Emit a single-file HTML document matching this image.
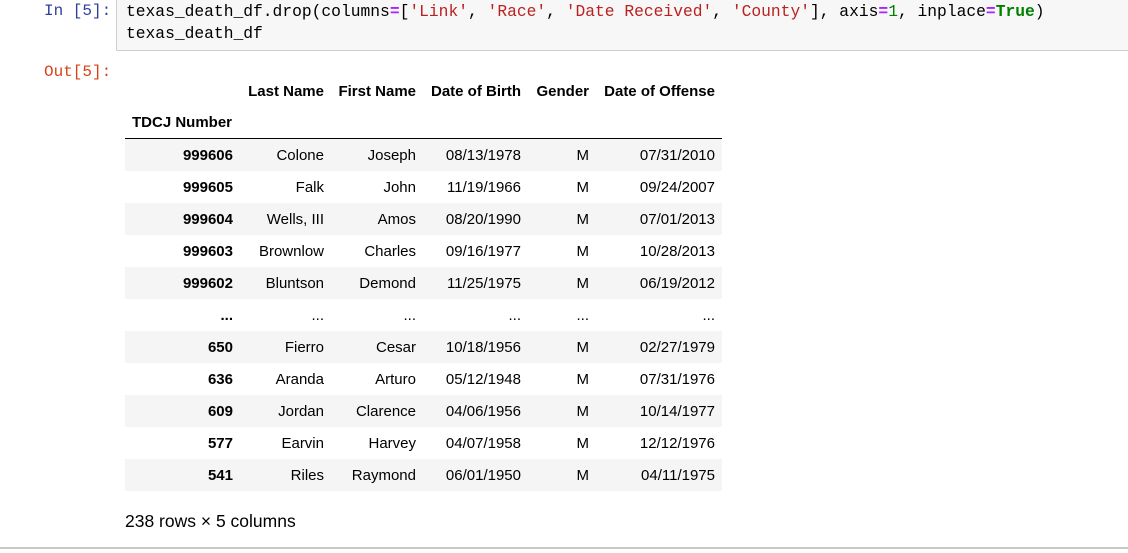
<!DOCTYPE html>
<html><head><meta charset="utf-8"><style>
body{margin:0;width:1128px;height:553px;background:#fff;position:relative;overflow:hidden;font-family:"Liberation Sans",Arial,sans-serif;}
.mono{font-family:"Liberation Mono","DejaVu Sans Mono",monospace;font-size:16px;}
.pin{position:absolute;left:44px;top:0px;color:#303f9f;line-height:22px}
.pout{position:absolute;left:44px;top:61px;color:#d84315;line-height:22px}
.code{position:absolute;left:116px;top:-1px;width:1020px;height:52px;background:#f7f7f7;border:1px solid #cfcfcf;box-sizing:border-box;padding:1px 0 0 9px;line-height:22px;color:#000;font-size:16.3px}
.s{color:#ba2121}.o{color:#aa22ff;font-weight:bold}.n{color:#008000}.k{color:#008000;font-weight:bold}
table{position:absolute;left:125px;top:76px;width:597px;border-collapse:collapse;table-layout:fixed;font-size:15px;color:#000}
td,th{padding:0 7px;text-align:right;height:32px;white-space:nowrap;}
th{font-weight:bold}
tbody tr:nth-child(odd){background:#f5f5f5}
thead tr:first-child th{height:30px}
thead tr:last-child th{border-bottom:1px solid #000;text-align:left;height:32px}
.foot{position:absolute;left:125px;top:511px;font-size:17.5px;color:#000}
.line{position:absolute;left:0;top:547px;width:1128px;height:2px;background:#c8c8c8}
</style></head><body>
<div class="mono pin">In [5]:</div>
<div class="mono code">texas_death_df.drop(columns<span class="o">=</span>[<span class="s">'Link'</span>, <span class="s">'Race'</span>, <span class="s">'Date Received'</span>, <span class="s">'County'</span>], axis<span class="o">=</span><span class="n">1</span>, inplace<span class="o">=</span><span class="k">True</span>)<br>texas_death_df</div>
<div class="mono pout">Out[5]:</div>
<table>
<colgroup><col style="width:115px"><col style="width:91px"><col style="width:92px"><col style="width:105px"><col style="width:68px"><col style="width:126px"></colgroup>
<thead>
<tr><th></th><th>Last Name</th><th>First Name</th><th>Date of Birth</th><th>Gender</th><th>Date of Offense</th></tr>
<tr><th>TDCJ Number</th><th></th><th></th><th></th><th></th><th></th></tr>
</thead>
<tbody>
<tr><th>999606</th><td>Colone</td><td>Joseph</td><td>08/13/1978</td><td>M</td><td>07/31/2010</td></tr>
<tr><th>999605</th><td>Falk</td><td>John</td><td>11/19/1966</td><td>M</td><td>09/24/2007</td></tr>
<tr><th>999604</th><td>Wells, III</td><td>Amos</td><td>08/20/1990</td><td>M</td><td>07/01/2013</td></tr>
<tr><th>999603</th><td>Brownlow</td><td>Charles</td><td>09/16/1977</td><td>M</td><td>10/28/2013</td></tr>
<tr><th>999602</th><td>Bluntson</td><td>Demond</td><td>11/25/1975</td><td>M</td><td>06/19/2012</td></tr>
<tr style="background:#fff"><th>...</th><td>...</td><td>...</td><td>...</td><td>...</td><td>...</td></tr>
<tr style="background:#f5f5f5"><th>650</th><td>Fierro</td><td>Cesar</td><td>10/18/1956</td><td>M</td><td>02/27/1979</td></tr>
<tr style="background:#fff"><th>636</th><td>Aranda</td><td>Arturo</td><td>05/12/1948</td><td>M</td><td>07/31/1976</td></tr>
<tr style="background:#f5f5f5"><th>609</th><td>Jordan</td><td>Clarence</td><td>04/06/1956</td><td>M</td><td>10/14/1977</td></tr>
<tr style="background:#fff"><th>577</th><td>Earvin</td><td>Harvey</td><td>04/07/1958</td><td>M</td><td>12/12/1976</td></tr>
<tr style="background:#f5f5f5"><th>541</th><td>Riles</td><td>Raymond</td><td>06/01/1950</td><td>M</td><td>04/11/1975</td></tr>
</tbody>
</table>
<div class="foot">238 rows × 5 columns</div>
<div class="line"></div>
</body></html>
